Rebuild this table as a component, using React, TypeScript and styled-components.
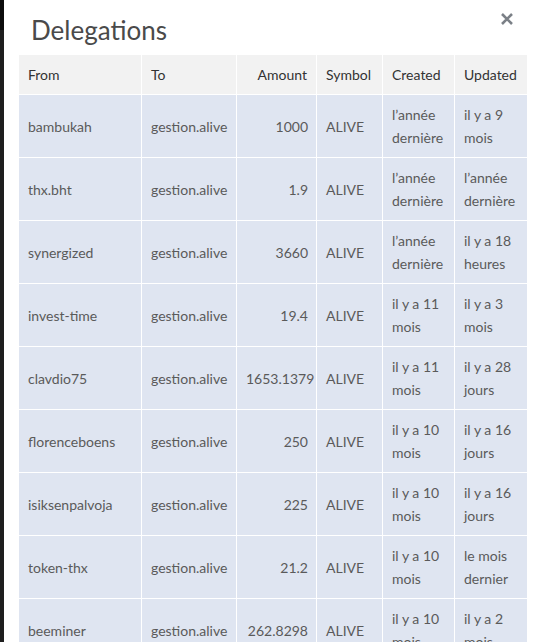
import React from "react";
import styled, { createGlobalStyle } from "styled-components";

const Global = createGlobalStyle`
  html, body { margin: 0; padding: 0; }
  body {
    background: #ffffff;
    font-family: "Source Sans Pro", Lato, "Liberation Sans", sans-serif;
    -webkit-font-smoothing: antialiased;
  }
`;

const Page = styled.div`
  display: flex;
  height: 642px;
  overflow: hidden;
  background: linear-gradient(#0c0c0c 0 30px, #1e1e1e 30px);
`;

const Modal = styled.div`
  flex: 1;
  margin-left: 4px;
  background: #ffffff;
  display: flex;
  flex-direction: column;
  overflow: hidden;
`;

const Header = styled.div`
  flex-shrink: 0;
  height: 55px;
  display: flex;
  align-items: center;
  justify-content: space-between;
  padding: 4px 27px 0 27px;
  box-sizing: border-box;
`;

const Title = styled.h2`
  margin: 0;
  font-size: 26px;
  font-weight: 400;
  color: #4a4a4a;
`;

const Close = styled.button`
  border: none;
  background: none;
  padding: 0;
  margin: -21px -1px 0 0;
  width: 14px;
  height: 14px;
  display: flex;
  align-items: center;
  justify-content: center;
  cursor: pointer;
`;

const Body = styled.div`
  flex-shrink: 0;
  padding: 0 13px 0 14px;
`;

const Table = styled.table`
  width: 509px;
  table-layout: fixed;
  border-collapse: collapse;
  font-size: 14px;
  line-height: 23px;
  color: #5a5a5a;
`;

const Th = styled.th<{ $right?: boolean }>`
  background: #f2f2f2;
  font-weight: 400;
  color: #333;
  text-align: ${(p) => (p.$right ? "right" : "left")};
  padding: 8px 9px;
  border: 1px solid #ffffff;
  border-top: none;
  white-space: nowrap;
`;

const Td = styled.td<{ $right?: boolean }>`
  background: #dfe5f1;
  text-align: ${(p) => (p.$right ? "right" : "left")};
  vertical-align: middle;
  padding: 8px ${(p) => (p.$right ? "8px" : "9px")} 8px 9px;
  border: 1px solid #ffffff;
  height: 46px;
`;

type Row = [string, string, string, string];

const rows: Row[] = [
  ["bambukah", "1000", "l’année dernière", "il y a 9 mois"],
  ["thx.bht", "1.9", "l’année dernière", "l’année dernière"],
  ["synergized", "3660", "l’année dernière", "il y a 18 heures"],
  ["invest-time", "19.4", "il y a 11 mois", "il y a 3 mois"],
  ["clavdio75", "1653.1379", "il y a 11 mois", "il y a 28 jours"],
  ["florenceboens", "250", "il y a 10 mois", "il y a 16 jours"],
  ["isiksenpalvoja", "225", "il y a 10 mois", "il y a 16 jours"],
  ["token-thx", "21.2", "il y a 10 mois", "le mois dernier"],
  ["beeminer", "262.8298", "il y a 10 mois", "il y a 2 mois"],
];

const CloseIcon = () => (
  <svg width="12" height="12" viewBox="0 0 12 12">
    <path d="M1 1 L11 11 M11 1 L1 11" stroke="#7b8087" strokeWidth="2.6" />
  </svg>
);

export default function App() {
  return (
    <>
      <Global />
      <Page>
        <Modal>
          <Header>
            <Title>Delegations</Title>
            <Close aria-label="Close">
              <CloseIcon />
            </Close>
          </Header>
          <Body>
            <Table>
              <colgroup>
                <col style={{ width: 123 }} />
                <col style={{ width: 95 }} />
                <col style={{ width: 80 }} />
                <col style={{ width: 66 }} />
                <col style={{ width: 72 }} />
                <col style={{ width: 73 }} />
              </colgroup>
              <thead>
                <tr>
                  <Th>From</Th>
                  <Th>To</Th>
                  <Th $right>Amount</Th>
                  <Th>Symbol</Th>
                  <Th>Created</Th>
                  <Th>Updated</Th>
                </tr>
              </thead>
              <tbody>
                {rows.map((r) => (
                  <tr key={r[0]}>
                    <Td>{r[0]}</Td>
                    <Td>gestion.alive</Td>
                    <Td $right>{r[1]}</Td>
                    <Td>ALIVE</Td>
                    <Td>{r[2]}</Td>
                    <Td>{r[3]}</Td>
                  </tr>
                ))}
              </tbody>
            </Table>
          </Body>
        </Modal>
      </Page>
    </>
  );
}
